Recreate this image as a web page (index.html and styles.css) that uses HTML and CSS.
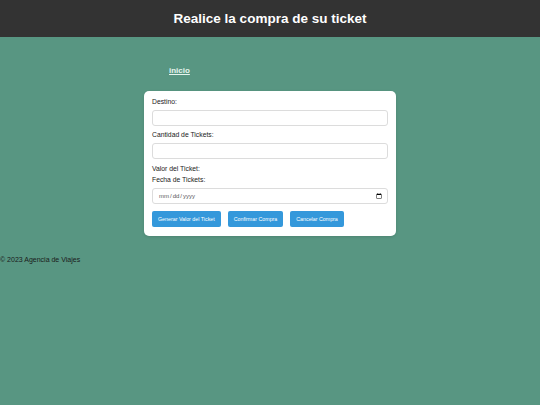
FILE: index.html
```html
<!DOCTYPE html>
<html lang="es">
<head>
<meta charset="utf-8">
<title>Compra de ticket</title>
<link rel="stylesheet" href="styles.css">
</head>
<body>
<header class="top">
  <h1 class="title">Realice la compra de su ticket</h1>
</header>
<main class="main">
  <nav class="nav"><a class="nav-link" href="#">inicio</a></nav>
  <form class="card">
    <label class="label" for="destino">Destino:</label>
    <input class="field" id="destino" type="text">
    <label class="label" for="cantidad">Cantidad de Tickets:</label>
    <input class="field" id="cantidad" type="text">
    <p class="line">Valor del Ticket:</p>
    <label class="label" for="fecha">Fecha de Tickets:</label>
    <input class="field date" id="fecha" type="date">
    <div class="actions">
      <button class="btn" type="button">Generar Valor del Ticket</button>
      <button class="btn" type="button">Confirmar Compra</button>
      <button class="btn" type="button">Cancelar Compra</button>
    </div>
  </form>
</main>
<footer class="footer">© 2023 Agencia de Viajes</footer>
</body>
</html>
```
FILE: styles.css
```css
html, body {
  margin: 0;
  padding: 0;
}
body {
  background: #589682;
  font-family: "Liberation Sans", Arial, sans-serif;
  min-height: 405px;
}
.top {
  background: #333333;
  height: 37px;
  display: flex;
  align-items: center;
  justify-content: center;
}
.title {
  margin: 0;
  color: #ffffff;
  font-size: 13.5px;
  font-weight: bold;
}
.main {
  width: 252px;
  margin: 0 auto;
  padding-top: 26px;
}
.nav {
  padding-left: 25px;
  height: 28px;
  line-height: 10px;
}
.nav-link {
  color: #e6f4ee;
  font-size: 8px;
  font-weight: bold;
  text-decoration: underline;
}
.card {
  background: #ffffff;
  border-radius: 5px;
  padding: 7px 8px 9px 8px;
  display: flex;
  flex-direction: column;
  box-shadow: 0 1px 3px rgba(0,0,0,0.12);
}
.label {
  font-size: 6.8px;
  line-height: 8px;
  color: #222;
  margin: 0 0 4px 0;
}
.field {
  box-sizing: border-box;
  height: 16px;
  margin: 0 0 5px 0;
  border: 1px solid #dcdcdc;
  border-radius: 3px;
  padding: 0 5px;
  font-size: 6px;
}
.date {
  color: #555;
  font-family: "Liberation Sans", Arial, sans-serif;
  font-size: 6px;
  padding-right: 3px;
  margin-bottom: 7px;
}
.line {
  margin: 1px 0 3px 0;
  font-size: 6.8px;
  line-height: 8px;
  color: #222;
}
.actions {
  display: flex;
  gap: 7px;
}
.btn {
  background: #3498db;
  color: #ffffff;
  border: none;
  border-radius: 2px;
  height: 16px;
  padding: 0 6px;
  font-family: "Liberation Sans", Arial, sans-serif;
  font-size: 5.3px;
}
.footer {
  margin-top: 20px;
  font-size: 7px;
  color: #1a1a1a;
}
```
